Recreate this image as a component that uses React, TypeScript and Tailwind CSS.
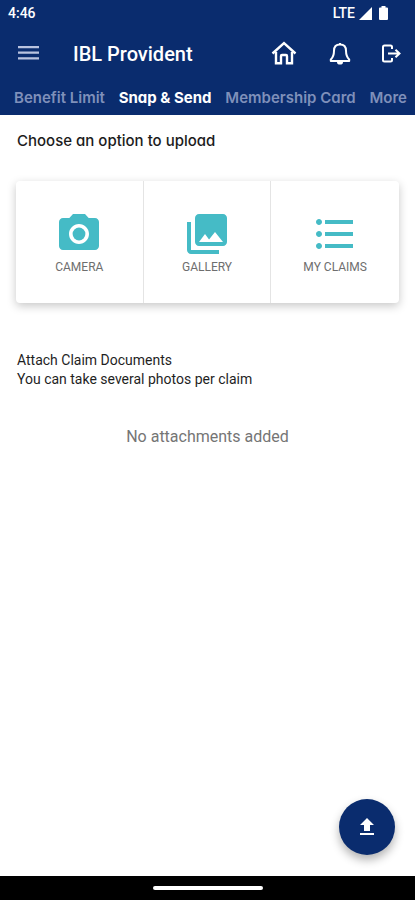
import React from 'react'
import {
  MdFileUpload,
  MdFormatListBulleted,
  MdPhotoCamera,
  MdPhotoLibrary,
} from 'react-icons/md'

const tabs = ['Benefit Limit', 'Snap & Send', 'Membership Card', 'More']

const options = [
  { label: 'CAMERA', icon: MdPhotoCamera },
  { label: 'GALLERY', icon: MdPhotoLibrary },
  { label: 'MY CLAIMS', icon: MdFormatListBulleted },
]

function StatusBar() {
  return (
    <div className="flex h-[26px] items-center justify-between pl-2 pr-6 text-sm font-medium text-white">
      <span>4:46</span>
      <div className="flex items-center gap-1">
        <span>LTE</span>
        <svg width="13" height="13" viewBox="0 0 13 13" fill="currentColor">
          <path d="M13 0v13H0z" />
        </svg>
        <svg width="15" height="14" viewBox="0 0 15 14" fill="currentColor">
          <path d="M5.5 0h4v1.5H11q1 0 1 1V13q0 1-1 1H4q-1 0-1-1V2.5q0-1 1-1h1.5z" />
        </svg>
      </div>
    </div>
  )
}

function HomeIcon() {
  return (
    <svg width="26" height="26" viewBox="0 0 26 26" fill="none" stroke="currentColor" strokeWidth="2.4">
      <path d="M1.5 12.5 13 2l11.500 10.500" />
      <path d="M5 11v11.300h5V15q0-1 1-1h4q1 0 1 1v7.300h5V11" />
    </svg>
  )
}

function BellIcon() {
  return (
    <svg width="22" height="24" viewBox="0 0 22 24" fill="none" stroke="currentColor" strokeWidth="2" strokeLinejoin="round">
      <path d="M11 2.500c-4 0-6 2.700-6 6.300 0 4.700-1 6.700-3.200 8.600V19h18.400v-1.600C18 15.500 17 13.500 17 8.800c0-3.600-2-6.300-6-6.300z" />
      <path d="M8 20a3 2.600 0 0 0 6 0z" fill="currentColor" stroke="none" />
      <path d="M10 1h2v2h-2z" fill="currentColor" stroke="none" />
    </svg>
  )
}

function LogoutIcon() {
  return (
    <svg width="20" height="20" viewBox="0 0 20 20" fill="none" stroke="currentColor" strokeWidth="2">
      <path d="M11 5V3q0-1.500-1.500-1.500h-6Q2 1.500 2 3v13q0 1.500 1.500 1.500h6q1.500 0 1.500-1.500v-2" />
      <path d="M7 9.500h11M14.500 5.700l4 3.800-4 3.800" />
    </svg>
  )
}

export default function App() {
  return (
    <div className="flex min-h-screen flex-col bg-white font-['Roboto',sans-serif]">
      <header className="bg-[#0a2c6e]">
        <StatusBar />
        <div className="flex h-14 items-center pl-[18px] pr-3.5 text-white">
          <button aria-label="Menu" className="text-[#b9c3e0]">
            <svg width="21" height="16" viewBox="0 0 21 16" fill="currentColor">
              <path d="M0 0h21v2.200H0zM0 5.600h21v2.200H0zM0 11.200h21v2.200H0z" />
            </svg>
          </button>
          <h1 className="ml-[34px] flex-1 text-xl font-medium">IBL Provident</h1>
          <button aria-label="Home">
            <HomeIcon />
          </button>
          <button aria-label="Notifications" className="ml-8">
            <BellIcon />
          </button>
          <button aria-label="Log out" className="ml-[30px]">
            <LogoutIcon />
          </button>
        </div>
        <nav className="flex h-[33px] items-center justify-between px-2 pl-3.5 font-['Inter',sans-serif] text-[15px] font-semibold [font-feature-settings:'cv11']">
          {tabs.map((tab) => (
            <a
              key={tab}
              href="#"
              className={
                tab === 'Snap & Send'
                  ? 'whitespace-nowrap font-bold text-white'
                  : 'whitespace-nowrap text-[#7f90ba]'
              }
            >
              {tab}
            </a>
          ))}
        </nav>
      </header>

      <main className="flex flex-1 flex-col px-4">
        <h2 className="mt-4 pl-px font-['Inter',sans-serif] text-[15px] font-medium leading-5 text-[#1c1c1c] [font-feature-settings:'cv11']">
          Choose an option to upload
        </h2>
        <div className="mt-[30px] grid grid-cols-3 divide-x divide-[#e4e4e4] rounded bg-white shadow-[0_3px_10px_rgba(0,0,0,0.22)]">
          {options.map(({ label, icon: Icon }) => (
            <button
              key={label}
              className="flex h-[122px] flex-col items-center justify-center gap-px text-xs text-[#6e6e6e]"
            >
              <Icon size={48} className="text-[#45bbc6]" />
              {label}
            </button>
          ))}
        </div>

        <div className="mt-12 pl-px text-sm leading-[19px] text-[#1f1f1f]">
          <p>Attach Claim Documents</p>
          <p>You can take several photos per claim</p>
        </div>
        <p className="mt-9 text-center text-base text-[#757575]">No attachments added</p>

        <button
          aria-label="Upload"
          className="mb-[21px] mr-1 mt-auto flex size-14 items-center justify-center self-end rounded-full bg-[#0a2c6e] text-white shadow-[0_5px_10px_rgba(0,0,0,0.3)]"
        >
          <MdFileUpload size={24} />
        </button>
      </main>

      <footer className="flex h-6 items-center justify-center bg-black">
        <div className="h-1 w-[110px] rounded-full bg-white" />
      </footer>
    </div>
  )
}
